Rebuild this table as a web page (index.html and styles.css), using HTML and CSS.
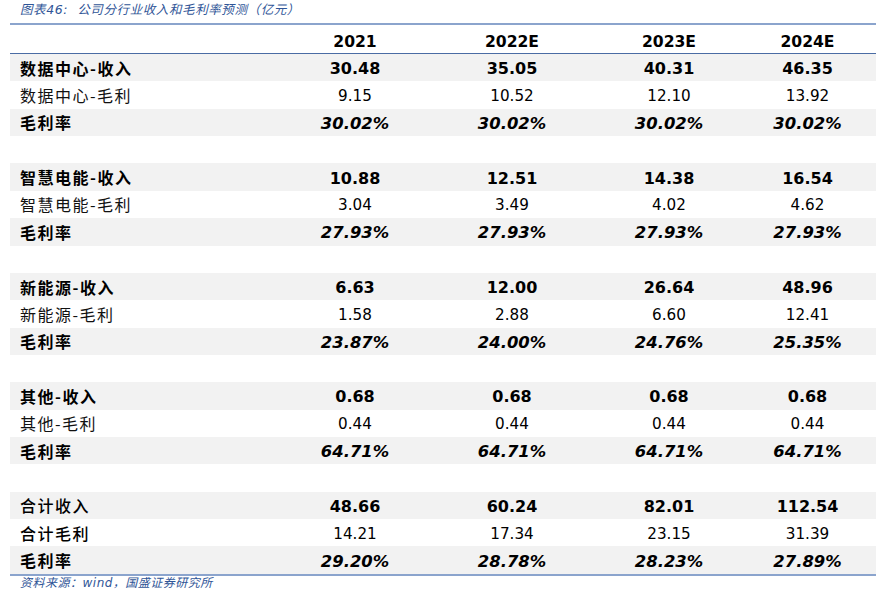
FILE: index.html
```html
<!DOCTYPE html>
<html lang="zh-CN">
<head>
<meta charset="utf-8">
<title>公司分行业收入和毛利率预测</title>
<link rel="stylesheet" href="styles.css">
</head>
<body>
<div class="page">
  <div class="title">图表46:&nbsp;&nbsp;公司分行业收入和毛利率预测（亿元）</div>
  <div class="table">
    <div class="row head"><span></span><span class="num">2021</span><span class="num">2022E</span><span class="num">2023E</span><span class="num">2024E</span></div>

    <div class="row shade"><span class="lab b">数据中心-收入</span><span class="num b">30.48</span><span class="num b">35.05</span><span class="num b">40.31</span><span class="num b">46.35</span></div>
    <div class="row"><span class="lab">数据中心-毛利</span><span class="num">9.15</span><span class="num">10.52</span><span class="num">12.10</span><span class="num">13.92</span></div>
    <div class="row shade"><span class="lab b">毛利率</span><span class="num bi">30.02%</span><span class="num bi">30.02%</span><span class="num bi">30.02%</span><span class="num bi">30.02%</span></div>
    <div class="row"></div>

    <div class="row shade"><span class="lab b">智慧电能-收入</span><span class="num b">10.88</span><span class="num b">12.51</span><span class="num b">14.38</span><span class="num b">16.54</span></div>
    <div class="row"><span class="lab">智慧电能-毛利</span><span class="num">3.04</span><span class="num">3.49</span><span class="num">4.02</span><span class="num">4.62</span></div>
    <div class="row shade"><span class="lab b">毛利率</span><span class="num bi">27.93%</span><span class="num bi">27.93%</span><span class="num bi">27.93%</span><span class="num bi">27.93%</span></div>
    <div class="row"></div>

    <div class="row shade"><span class="lab b">新能源-收入</span><span class="num b">6.63</span><span class="num b">12.00</span><span class="num b">26.64</span><span class="num b">48.96</span></div>
    <div class="row"><span class="lab">新能源-毛利</span><span class="num">1.58</span><span class="num">2.88</span><span class="num">6.60</span><span class="num">12.41</span></div>
    <div class="row shade"><span class="lab b">毛利率</span><span class="num bi">23.87%</span><span class="num bi">24.00%</span><span class="num bi">24.76%</span><span class="num bi">25.35%</span></div>
    <div class="row"></div>

    <div class="row shade"><span class="lab b">其他-收入</span><span class="num b">0.68</span><span class="num b">0.68</span><span class="num b">0.68</span><span class="num b">0.68</span></div>
    <div class="row"><span class="lab">其他-毛利</span><span class="num">0.44</span><span class="num">0.44</span><span class="num">0.44</span><span class="num">0.44</span></div>
    <div class="row shade"><span class="lab b">毛利率</span><span class="num bi">64.71%</span><span class="num bi">64.71%</span><span class="num bi">64.71%</span><span class="num bi">64.71%</span></div>
    <div class="row"></div>

    <div class="row shade"><span class="lab m">合计收入</span><span class="num b">48.66</span><span class="num b">60.24</span><span class="num b">82.01</span><span class="num b">112.54</span></div>
    <div class="row"><span class="lab m">合计毛利</span><span class="num">14.21</span><span class="num">17.34</span><span class="num">23.15</span><span class="num">31.39</span></div>
    <div class="row shade"><span class="lab b">毛利率</span><span class="num bi">29.20%</span><span class="num bi">28.78%</span><span class="num bi">28.23%</span><span class="num bi">27.89%</span></div>
  </div>
  <div class="source">资料来源：wind，国盛证券研究所</div>
</div>
</body>
</html>
```
FILE: styles.css
```css
html, body {
  margin: 0;
  padding: 0;
  background: #ffffff;
}

.page {
  width: 894px;
  height: 605px;
  font-family: "DejaVu Sans", "Noto Sans CJK SC", sans-serif;
  color: #000;
}

.title {
  height: 23px;
  line-height: 20px;
  padding-left: 20px;
  font-family: "DejaVu Sans", "Noto Sans CJK SC", sans-serif;
  font-size: 12.5px;
  font-style: italic;
  color: #2f5597;
  letter-spacing: 0.6px;
}

.table {
  margin-left: 10px;
  width: 866px;
  border-top: 2px solid #8ba4cd;
  border-bottom: 2px solid #8ba4cd;
}

.row {
  display: grid;
  grid-template-columns: 275px 140px 174px 140px 137px;
  align-items: center;
  height: 27.37px;
}

.row.head {
  height: 28px;
  padding-top: 3px;
  box-sizing: border-box;
  border-bottom: 1px solid #4a6ca4;
  height: 29px;
  font-weight: 700;
}

.row.shade {
  background: #f2f2f2;
}

.lab {
  padding-left: 10px;
  font-family: "Noto Sans CJK SC", sans-serif;
  font-size: 16px;
  letter-spacing: 1.5px;
  font-weight: 400;
  color: #111;
}

.lab.b {
  font-weight: 700;
  color: #000;
}

.lab.m {
  font-weight: 500;
  color: #000;
}

.num {
  text-align: center;
  font-family: "DejaVu Sans", sans-serif;
  font-size: 15.2px;
  padding-top: 2px;
}

.head .num {
  font-weight: 700;
  font-size: 15.6px;
}

.num.b {
  font-weight: 700;
  font-size: 16px;
}

.num.bi {
  font-weight: 700;
  font-style: italic;
  font-size: 16.4px;
}

.source {
  padding-left: 20px;
  line-height: 14px;
  font-family: "DejaVu Sans", "Noto Sans CJK SC", sans-serif;
  font-size: 12px;
  font-style: italic;
  color: #2f5597;
  letter-spacing: 0.5px;
}
```
